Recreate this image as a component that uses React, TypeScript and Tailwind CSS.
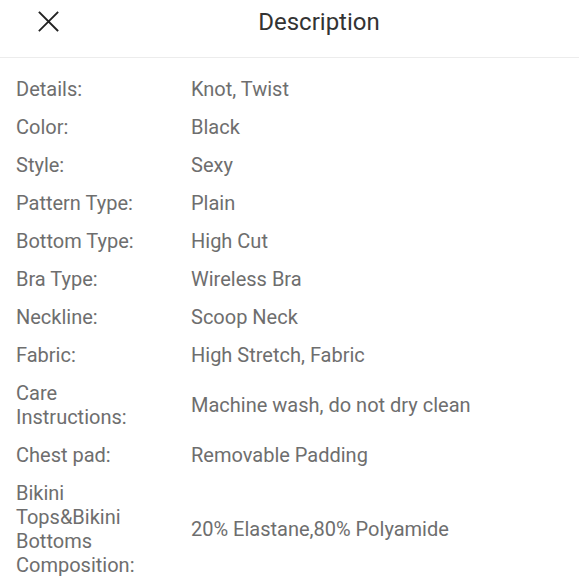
import React from "react";

const rows: [string, string][] = [
  ["Details:", "Knot, Twist"],
  ["Color:", "Black"],
  ["Style:", "Sexy"],
  ["Pattern Type:", "Plain"],
  ["Bottom Type:", "High Cut"],
  ["Bra Type:", "Wireless Bra"],
  ["Neckline:", "Scoop Neck"],
  ["Fabric:", "High Stretch, Fabric"],
  ["Care Instructions:", "Machine wash, do not dry clean"],
  ["Chest pad:", "Removable Padding"],
  ["Bikini Tops&Bikini Bottoms Composition:", "20% Elastane,80% Polyamide"],
];

export default function App() {
  return (
    <div className="w-[579px] h-[580px] bg-white overflow-hidden" style={{ fontFamily: "Roboto, 'Noto Sans', sans-serif" }}>
      <div className="h-[58px] border-b border-[#ececec] flex items-start">
        <div className="pl-[38px] pt-[11px]">
          <svg width="21" height="21" viewBox="0 0 21 21" fill="none" stroke="#222" strokeWidth="1.8" strokeLinecap="square">
            <path d="M1.5 1.5 L19.5 19.5 M19.5 1.5 L1.5 19.5" />
          </svg>
        </div>
        <div className="flex-1 text-center pt-[8px] text-[24px] leading-[28px] text-[#333]">Description</div>
      </div>
      <div className="pt-[19px] flex flex-col gap-[14px]">
        {rows.map(([k, v]) => (
          <div key={k} className="flex items-center pl-[16px]">
            <div className="w-[145px] mr-[30px] text-[20px] leading-[24px] text-[#6e6e6e]">{k}</div>
            <div className="flex-1 text-[20px] leading-[24px] text-[#6e6e6e]">{v}</div>
          </div>
        ))}
      </div>
    </div>
  );
}
